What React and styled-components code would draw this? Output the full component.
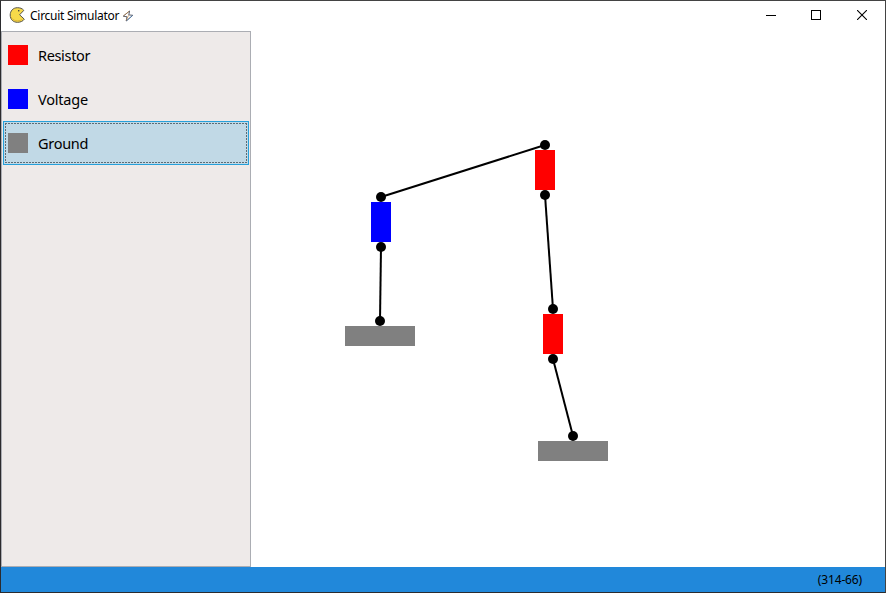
import React from "react";
import styled, { createGlobalStyle } from "styled-components";

const GlobalStyle = createGlobalStyle`
  *, *::before, *::after { box-sizing: border-box; }
  body { margin: 0; background: #fff; overflow: hidden; }
`;

const Window = styled.div`
  display: flex;
  flex-direction: column;
  width: 886px;
  height: 593px;
  background: #fff;
  border: 1px solid #2b2b2e;
  border-top-color: #434343;
  border-right-color: #434343;
  font-family: "Noto Sans", "Open Sans", sans-serif;
  color: #000;
  cursor: default;
`;

const TitleBar = styled.header`
  display: flex;
  align-items: center;
  flex: 0 0 30px;
  padding-left: 8px;
`;

const AppIcon = styled.svg`
  width: 16px;
  height: 16px;
  margin-right: 5px;
  margin-top: -2px;
`;

const Title = styled.h1`
  margin: 0;
  font-size: 12px;
  font-weight: 400;
  line-height: 16px;
  letter-spacing: -0.27px;
  white-space: nowrap;
  width: 92px;
`;

const BoltIcon = styled.svg`
  width: 12px;
  height: 12px;
`;

const WindowControls = styled.div`
  display: flex;
  align-self: flex-start;
  margin-left: auto;
`;

const ControlButton = styled.button`
  display: flex;
  align-items: center;
  justify-content: center;
  width: ${(p) => p.$width}px;
  height: 28px;
  padding: 0;
  border: 0;
  background: transparent;
`;

const Workspace = styled.main`
  display: flex;
  flex: 1;
  min-height: 0;
`;

const Palette = styled.ul`
  flex: 0 0 250px;
  margin: 0;
  padding: 1px;
  list-style: none;
  background: #eeeae9;
  border: 1px solid #abadb3;
`;

const PaletteItem = styled.li`
  display: flex;
  align-items: center;
  height: 44px;
  padding: 0 4px;
  border: 1px solid ${(p) => (p.$selected ? "#26a0da" : "transparent")};
  background: ${(p) => (p.$selected ? "#c1d9e6" : "transparent")};
  position: relative;
`;

const FocusRing = styled.span`
  position: absolute;
  inset: 1px;
  --dash: #5c6c75 0 2px, transparent 2px 3px;
  background:
    repeating-linear-gradient(to right, var(--dash)) top / 100% 1px no-repeat,
    repeating-linear-gradient(to right, var(--dash)) bottom / 100% 1px no-repeat,
    repeating-linear-gradient(to bottom, var(--dash)) left / 1px 100% no-repeat,
    repeating-linear-gradient(to bottom, var(--dash)) right / 1px 100% no-repeat;
`;

const Swatch = styled.span`
  width: 20px;
  height: 20px;
  margin-right: 10px;
  background: ${(p) => p.$color};
`;

const ItemLabel = styled.span`
  font-size: 14.5px;
  line-height: 20px;
  letter-spacing: ${(p) => p.$spacing}px;
`;

const Canvas = styled.svg`
  display: block;
  width: 634px;
  height: 536px;
`;

const StatusBar = styled.footer`
  display: flex;
  align-items: center;
  justify-content: flex-end;
  flex: 0 0 25px;
  padding: 0 23px 0 0;
  background: #2188da;
  font-size: 12px;
  line-height: 16px;
  letter-spacing: -0.15px;
`;

const components = [
  { name: "Resistor", color: "#ff0000", spacing: -0.34 },
  { name: "Voltage", color: "#0000ff", spacing: -0.2 },
  { name: "Ground", color: "#808080", spacing: -0.3, selected: true },
];

const wires = [
  [381, 197, 545, 145],
  [381, 247, 380, 321],
  [545, 195, 553, 309],
  [553, 359, 573, 436],
];

const parts = [
  { x: 371, y: 202, w: 20, h: 40, color: "#0000ff" },
  { x: 535, y: 150, w: 20, h: 40, color: "#ff0000" },
  { x: 543, y: 314, w: 20, h: 40, color: "#ff0000" },
  { x: 345, y: 326, w: 70, h: 20, color: "#808080" },
  { x: 538, y: 441, w: 70, h: 20, color: "#808080" },
];

export default function App() {
  return (
    <>
      <GlobalStyle />
      <Window>
        <TitleBar>
          <AppIcon viewBox="0 0 16 16">
            <path
              d="M14.8 3.4 C13.2 1.4 11 .7 8.4 .7 C4 .7 1.2 4 1.2 8 C1.2 12.4 4.2 15.3 8.4 15.3 C11.5 15.3 13.9 14.2 15.3 12.2 L10.6 7.8 Z"
              fill="#f7da4a"
              stroke="#55534a"
              strokeWidth="1"
            />
            <path d="M2.2 10 C3.7 13.9 9 15 13.4 12.4" fill="none" stroke="#dfb735" />
            <rect x="9" y="3" width="1.4" height="1.4" fill="#4b4a43" />
          </AppIcon>
          <Title>Circuit Simulator</Title>
          <BoltIcon viewBox="0 0 12 12">
            <path
              d="M7.6 1 L1.2 6.2 L5 6.8 L4.2 11 L10.8 5.3 L6.8 4.9 Z"
              fill="#fff"
              stroke="#5a5f6c"
              strokeWidth="1"
              strokeLinejoin="round"
            />
            <path d="M7.2 1.2 L1.4 6 M6.6 5.2 L4.2 10.4" stroke="#c2884a" strokeWidth="0.7" />
            <path d="M10.4 5.6 L4.8 10.6" stroke="#4c86c4" strokeWidth="0.7" />
          </BoltIcon>
          <WindowControls>
            <ControlButton $width={44} aria-label="Minimize">
              <svg width="10" height="10" shapeRendering="crispEdges">
                <path d="M0 5.5H10" stroke="#000" />
              </svg>
            </ControlButton>
            <ControlButton $width={46} aria-label="Maximize">
              <svg width="10" height="10" shapeRendering="crispEdges">
                <rect x="0.5" y="0.5" width="9" height="9" fill="none" stroke="#000" />
              </svg>
            </ControlButton>
            <ControlButton $width={46} aria-label="Close">
              <svg width="10" height="10">
                <path d="M0 0L10 10M10 0L0 10" stroke="#000" strokeWidth="1.1" />
              </svg>
            </ControlButton>
          </WindowControls>
        </TitleBar>
        <Workspace>
          <Palette>
            {components.map((c) => (
              <PaletteItem key={c.name} $selected={c.selected}>
                {c.selected && <FocusRing />}
                <Swatch $color={c.color} />
                <ItemLabel $spacing={c.spacing}>{c.name}</ItemLabel>
              </PaletteItem>
            ))}
          </Palette>
          <Canvas viewBox="251 31 634 536">
            {parts.map((p) => (
              <rect key={`${p.x}-${p.y}`} x={p.x} y={p.y} width={p.w} height={p.h} fill={p.color} />
            ))}
            {wires.map(([x1, y1, x2, y2]) => (
              <g key={`${x1}-${y1}`}>
                <line x1={x1} y1={y1} x2={x2} y2={y2} stroke="#000" strokeWidth="2" />
                <circle cx={x1} cy={y1} r="5" />
                <circle cx={x2} cy={y2} r="5" />
              </g>
            ))}
          </Canvas>
        </Workspace>
        <StatusBar>(314-66)</StatusBar>
      </Window>
    </>
  );
}
